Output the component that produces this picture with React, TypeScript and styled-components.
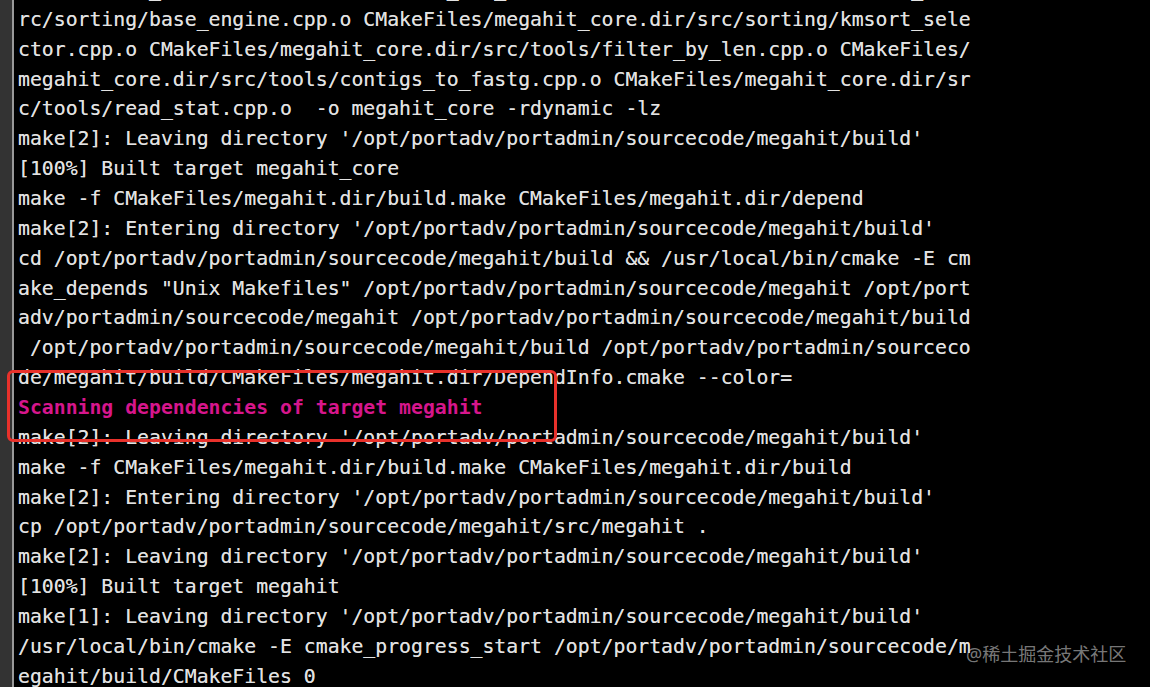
import React from "react";
import styled, { createGlobalStyle } from "styled-components";

const Global = createGlobalStyle`
  html, body { margin: 0; padding: 0; background: #000; }
  body { width: 1150px; height: 687px; overflow: hidden; }
`;

const Screen = styled.div`
  position: relative;
  display: flex;
  width: 1150px;
  height: 687px;
  overflow: hidden;
  background: #000;
`;

const Gutter = styled.div`
  flex: 0 0 12px;
  background: #333333;
  border-right: 2px solid #9a9a9a;
`;

const Terminal = styled.div`
  flex: 1;
  padding-left: 4px;
  overflow: hidden;
`;

const Output = styled.div`
  margin-top: -25px;
  font-family: "DejaVu Sans Mono", "Liberation Mono", monospace;
  font-size: 19.8px;
  line-height: 29.86px;
  white-space: pre;
  color: #e2e2e2;
  text-shadow: 0 0 0.6px rgba(226, 226, 226, 0.7);
`;

const Line = styled.div<{ $tone?: "normal" | "pink" }>`
  color: ${(p) => (p.$tone === "pink" ? "#d6168c" : "#e2e2e2")};
  font-weight: ${(p) => (p.$tone === "pink" ? 700 : 400)};
  text-shadow: ${(p) => (p.$tone === "pink" ? "none" : "inherit")};
`;

const Highlight = styled.div`
  position: absolute;
  left: 7px;
  top: 370px;
  width: 544px;
  height: 66px;
  border: 3px solid #e8312b;
  border-radius: 6px;
  pointer-events: none;
`;

const Watermark = styled.div`
  position: absolute;
  left: 966px;
  top: 642px;
  font-family: "Noto Sans", "Noto Sans CJK SC", sans-serif;
  font-size: 18px;
  line-height: 24px;
  color: rgba(200, 200, 200, 0.62);
`;

const lines: { text: string; tone?: "normal" | "pink" }[] = [
  { text: "ing/megahit_core.dir/src/sorting/lv2_gpu_functions.cpp.o CMakeFiles/megahit_core.dir/s" },
  { text: "rc/sorting/base_engine.cpp.o CMakeFiles/megahit_core.dir/src/sorting/kmsort_sele" },
  { text: "ctor.cpp.o CMakeFiles/megahit_core.dir/src/tools/filter_by_len.cpp.o CMakeFiles/" },
  { text: "megahit_core.dir/src/tools/contigs_to_fastg.cpp.o CMakeFiles/megahit_core.dir/sr" },
  { text: "c/tools/read_stat.cpp.o  -o megahit_core -rdynamic -lz" },
  { text: "make[2]: Leaving directory '/opt/portadv/portadmin/sourcecode/megahit/build'" },
  { text: "[100%] Built target megahit_core" },
  { text: "make -f CMakeFiles/megahit.dir/build.make CMakeFiles/megahit.dir/depend" },
  { text: "make[2]: Entering directory '/opt/portadv/portadmin/sourcecode/megahit/build'" },
  { text: "cd /opt/portadv/portadmin/sourcecode/megahit/build && /usr/local/bin/cmake -E cm" },
  { text: "ake_depends \"Unix Makefiles\" /opt/portadv/portadmin/sourcecode/megahit /opt/port" },
  { text: "adv/portadmin/sourcecode/megahit /opt/portadv/portadmin/sourcecode/megahit/build" },
  { text: " /opt/portadv/portadmin/sourcecode/megahit/build /opt/portadv/portadmin/sourceco" },
  { text: "de/megahit/build/CMakeFiles/megahit.dir/DependInfo.cmake --color=" },
  { text: "Scanning dependencies of target megahit", tone: "pink" },
  { text: "make[2]: Leaving directory '/opt/portadv/portadmin/sourcecode/megahit/build'" },
  { text: "make -f CMakeFiles/megahit.dir/build.make CMakeFiles/megahit.dir/build" },
  { text: "make[2]: Entering directory '/opt/portadv/portadmin/sourcecode/megahit/build'" },
  { text: "cp /opt/portadv/portadmin/sourcecode/megahit/src/megahit ." },
  { text: "make[2]: Leaving directory '/opt/portadv/portadmin/sourcecode/megahit/build'" },
  { text: "[100%] Built target megahit" },
  { text: "make[1]: Leaving directory '/opt/portadv/portadmin/sourcecode/megahit/build'" },
  { text: "/usr/local/bin/cmake -E cmake_progress_start /opt/portadv/portadmin/sourcecode/m" },
  { text: "egahit/build/CMakeFiles 0" },
];

export default function App() {
  return (
    <>
      <Global />
      <Screen>
        <Gutter />
        <Terminal>
          <Output>
            {lines.map((l, i) => (
              <Line key={i} $tone={l.tone}>
                {l.text}
              </Line>
            ))}
          </Output>
        </Terminal>
        <Highlight />
        <Watermark>@稀土掘金技术社区</Watermark>
      </Screen>
    </>
  );
}
